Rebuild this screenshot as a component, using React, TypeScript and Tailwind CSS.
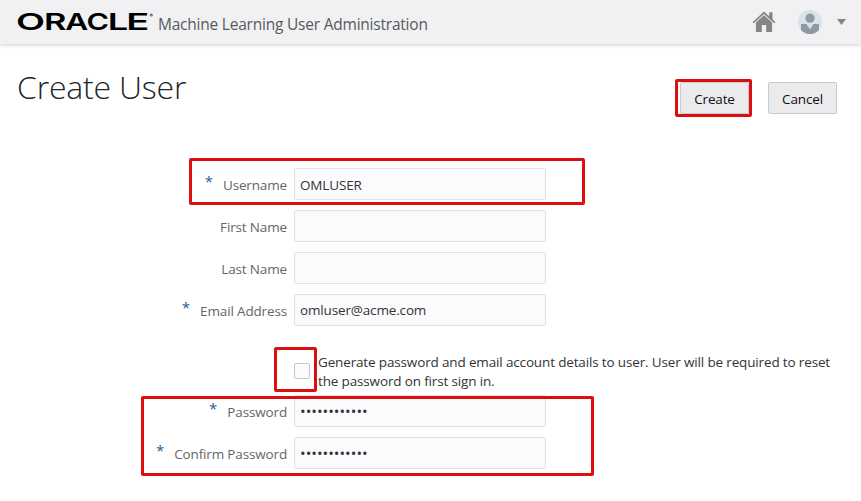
import type { ReactNode } from 'react';

const letters = [
  { ch: 'O', x: 16, w: 29 },
  { ch: 'R', x: 44, w: 22.5 },
  { ch: 'A', x: 65.2, w: 23 },
  { ch: 'C', x: 86.5, w: 22.5 },
  { ch: 'L', x: 107.8, w: 20.5 },
  { ch: 'E', x: 126.2, w: 23 },
];

function Wordmark() {
  return (
    <svg className="h-11 w-[155px] shrink-0" viewBox="0 0 155 44" role="img" aria-label="Oracle">
      {letters.map((l) => (
        <text
          key={l.ch}
          x={l.x}
          y="29.9"
          textLength={l.w}
          lengthAdjust="spacingAndGlyphs"
          fontFamily="Inter, sans-serif"
          fontSize="23"
          fontWeight="600"
          fill="#000"
        >
          {l.ch}
        </text>
      ))}
      <circle cx="151.3" cy="15" r="1.6" fill="#777" />
    </svg>
  );
}

function Field({ label, required, children }: { label: string; required?: boolean; children?: ReactNode }) {
  return (
    <div className="flex h-8 items-center">
      <div className="flex w-[287px] items-center justify-end text-[#636669]">
        {required && <span className="mr-[10px] h-8 text-[15px] leading-[26px] text-[#1f5c9c]">*</span>}
        <span className="mt-[2px] text-[13.5px] leading-5 tracking-[-0.15px]">{label}</span>
      </div>
      <div className="ml-[7px] flex h-8 w-[252px] items-center rounded-[2px] border border-[#dfe2e4] bg-[#fbfbfd] pl-[5px] text-[13.5px] tracking-[-0.15px] text-[#333]">
        {children}
      </div>
    </div>
  );
}

function Dots() {
  return <span className="text-[15px] leading-5 tracking-normal">••••••••••••</span>;
}

export default function App() {
  return (
    <div className="relative h-[501px] w-[861px] overflow-hidden bg-white font-['Open_Sans','Noto_Sans',sans-serif] text-[#333]">
      <header className="flex h-11 items-center bg-[#f1f1f3] shadow-[0_1px_4px_rgba(0,0,0,0.2)]">
        <Wordmark />
        <span className="ml-[3px] mt-[3px] whitespace-nowrap text-[15.5px] leading-6 tracking-[-0.22px] text-[#58595b]">
          Machine Learning User Administration
        </span>
        <div className="ml-auto flex items-center pr-[15px]">
          <svg className="h-[22px] w-6" viewBox="0 0 24 22" fill="#858585">
            <path d="M12 0.5 0.5 11.2 1.8 12.2 12 3 22.2 12.2 23.5 11.2 20.5 8.3V1.2H17.2V5.2Z" />
            <path d="M12 4.3 3.9 11.6V21H9.8V14H14.2V21H20.1V11.6Z" />
          </svg>
          <svg className="ml-[22px] h-6 w-6" viewBox="0 0 24 24">
            <circle cx="12" cy="12" r="12" fill="#dbe2e6" />
            <circle cx="12" cy="8.2" r="4.6" fill="#8b9ba5" />
            <path d="M3 14H8.5L12 19.5 15.5 14H21V20A12 12 0 0 1 3 20Z" fill="#8b9ba5" />
          </svg>
          <svg className="ml-[15px] h-[6px] w-[9px]" viewBox="0 0 9 6">
            <path d="M0 0H9L4.5 6Z" fill="#858585" />
          </svg>
        </div>
      </header>
      <div className="flex h-[124px] items-start justify-between pl-[17px] pr-6">
        <h1 className="mt-[21px] whitespace-nowrap text-[32px] font-light leading-[43px] tracking-[-0.2px] text-[#222529]">Create User</h1>
        <div className="mt-[38px] flex gap-[19px] text-[13.5px] tracking-[-0.15px] text-[#111]">
          <div className="relative">
            <button className="h-8 w-[69px] rounded-[2px] border border-[#c8cacc] bg-[#ebebed] pt-[3px]">Create</button>
            <div className="absolute -left-[5px] -top-[3px] h-[38px] w-[77px] rounded-[2px] border-[3px] border-[#dc0f10]" />
          </div>
          <button className="h-8 w-[69px] rounded-[2px] border border-[#c8cacc] bg-[#ebebed] pt-[3px]">Cancel</button>
        </div>
      </div>
      <main className="flex flex-col gap-[10px]">
        <Field label="Username" required>
          <span className="mt-[2px]">OMLUSER</span>
        </Field>
        <Field label="First Name" />
        <Field label="Last Name" />
        <Field label="Email Address" required>
          <span className="mt-px">omluser@acme.com</span>
        </Field>
        <div className="flex h-[49px] items-start pl-[294px] pt-[17px]">
          <div className="mt-[10px] h-4 w-4 rounded-[2px] border border-[#c4c8cb] bg-[#fbfbfd]" />
          <p className="ml-2 whitespace-nowrap text-[13.5px] leading-[19px] tracking-[-0.15px]">
            Generate password and email account details to user. User will be required to reset
            <br />
            the password on first sign in.
          </p>
        </div>
        <Field label="Password" required>
          <Dots />
        </Field>
        <Field label="Confirm Password" required>
          <Dots />
        </Field>
      </main>
      <div className="absolute left-[189px] top-[158px] h-[47px] w-[396px] rounded-[2px] border-[3px] border-[#dc0f10]" />
      <div className="absolute left-[274px] top-[347px] h-[45px] w-[43px] rounded-[2px] border-[3px] border-[#dc0f10]" />
      <div className="absolute left-[141px] top-[396px] h-[80px] w-[453px] rounded-[2px] border-[3px] border-[#dc0f10]" />
    </div>
  );
}
